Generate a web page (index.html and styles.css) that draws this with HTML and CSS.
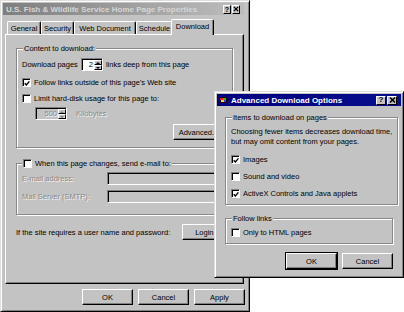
FILE: index.html
```html
<!DOCTYPE html>
<html lang="en">
<head>
    <meta charset="UTF-8">
    <title>U.S. Fish &amp; Wildlife Service Home Page Properties</title>
    <link rel="stylesheet" href="styles.css">
</head>
<body>
    <div class="window main">
        <div class="titlebar inactive">
            <span class="title">U.S. Fish &amp; Wildlife Service Home Page Properties</span>
            <span class="tbtn">?</span>
            <span class="tbtn"><svg width="7" height="6" viewBox="0 0 7 6"><path d="M1 0.5 L6 5.5 M6 0.5 L1 5.5" stroke="#000" stroke-width="1.4"/></svg></span>
        </div>

        <div class="tabs">
            <div class="tab tab-general">General</div>
            <div class="tab tab-security">Security</div>
            <div class="tab tab-web">Web Document</div>
            <div class="tab tab-schedule">Schedule</div>
            <div class="tab tab-download active">Download</div>
        </div>

        <div class="panel">
            <fieldset class="group content-group">
                <legend>Content to download:</legend>
                <div class="row depth-row">
                    <span>Download pages</span>
                    <span class="spin">
                        <span class="spin-val">2</span>
                        <span class="spin-btns"><i class="arrow up"></i><i class="arrow down"></i></span>
                    </span>
                    <span>links deep from this page</span>
                </div>
                <div class="check-row follow-row">
                    <span class="box"><svg width="7" height="7" viewBox="0 0 7 7"><path d="M0.8 3.2 L2.8 5.3 L6.3 1" fill="none" stroke="#000" stroke-width="1.6"/></svg></span>
                    <span>Follow links outside of this page's Web site</span>
                </div>
                <div class="check-row limit-row">
                    <span class="box"></span>
                    <span>Limit hard-disk usage for this page to:</span>
                </div>
                <div class="row kb-row disabled">
                    <span class="spin wide">
                        <span class="spin-val">500</span>
                        <span class="spin-btns"><i class="arrow up"></i><i class="arrow down"></i></span>
                    </span>
                    <span class="kb-label">Kilobytes</span>
                </div>
                <div class="row adv-row">
                    <button class="btn">Advanced...</button>
                </div>
            </fieldset>

            <fieldset class="group mail-group">
                <legend>
                    <span class="check-row">
                        <span class="box"></span>
                        <span>When this page changes, send e-mail to:</span>
                    </span>
                </legend>
                <div class="field-row disabled">
                    <span class="field-label">E-mail address:</span>
                    <span class="textbox"></span>
                </div>
                <div class="field-row disabled">
                    <span class="field-label">Mail Server (SMTP):</span>
                    <span class="textbox"></span>
                </div>
            </fieldset>

            <div class="login-row">
                <span>If the site requires a user name and password:</span>
                <button class="btn">Login...</button>
            </div>
        </div>

        <div class="footer">
            <button class="btn">OK</button>
            <button class="btn">Cancel</button>
            <button class="btn">Apply</button>
        </div>
    </div>

    <div class="window dialog">
        <div class="titlebar active-bar">
            <svg class="app-icon" width="9" height="8" viewBox="0 0 9 8">
                <rect x="0" y="1" width="9" height="6" fill="#200010"/>
                <rect x="1" y="2" width="3" height="2" fill="#e02020"/>
                <rect x="4" y="2" width="3" height="2" fill="#20c020"/>
                <rect x="2" y="4" width="3" height="2" fill="#f0e020"/>
                <rect x="5" y="4" width="2" height="2" fill="#2040ff"/>
            </svg>
            <span class="title">Advanced Download Options</span>
            <span class="tbtn">?</span>
            <span class="tbtn"><svg width="7" height="6" viewBox="0 0 7 6"><path d="M1 0.5 L6 5.5 M6 0.5 L1 5.5" stroke="#000" stroke-width="1.5"/></svg></span>
        </div>

        <div class="dialog-body">
            <fieldset class="group items-group">
                <legend>Items to download on pages</legend>
                <p class="note">Choosing fewer items decreases download time,<br>but may omit content from your pages.</p>
                <div class="check-row">
                    <span class="box"><svg width="7" height="7" viewBox="0 0 7 7"><path d="M0.8 3.2 L2.8 5.3 L6.3 1" fill="none" stroke="#000" stroke-width="1.6"/></svg></span>
                    <span>Images</span>
                </div>
                <div class="check-row">
                    <span class="box"></span>
                    <span>Sound and video</span>
                </div>
                <div class="check-row">
                    <span class="box"><svg width="7" height="7" viewBox="0 0 7 7"><path d="M0.8 3.2 L2.8 5.3 L6.3 1" fill="none" stroke="#000" stroke-width="1.6"/></svg></span>
                    <span>ActiveX Controls and Java applets</span>
                </div>
            </fieldset>

            <fieldset class="group follow-group">
                <legend>Follow links</legend>
                <div class="check-row">
                    <span class="box"></span>
                    <span>Only to HTML pages</span>
                </div>
            </fieldset>

            <div class="dialog-buttons">
                <button class="btn default">OK</button>
                <button class="btn">Cancel</button>
            </div>
        </div>
    </div>
</body>
</html>
```

FILE: styles.css
```css
body {
    margin: 0;
    width: 404px;
    height: 312px;
    overflow: hidden;
    position: relative;
    background: #fff;
    font-family: 'Liberation Sans', Arial, sans-serif;
    font-size: 7.5px;
    color: #000;
}
.window {
    box-sizing: border-box;
    background: #c3c3c3;
    border: 1px solid;
    border-color: #dedede #000 #000 #dedede;
    box-shadow: inset 1px 1px #fff, inset -1px -1px #808080;
    padding: 2px;
}
.main {
    width: 250px;
    height: 312px;
    display: flex;
    flex-direction: column;
}
.titlebar {
    height: 12px;
    display: flex;
    align-items: center;
    padding: 0 4px 0 3px;
    gap: 1px;
}
.titlebar .title {
    flex: 1;
    font-weight: bold;
    font-size: 8px;
    white-space: nowrap;
    overflow: hidden;
}
.inactive {
    margin-right: 3px;
    background: linear-gradient(to right, #7e7e7e, #bdbdbd);
}
.inactive .title {
    color: #d6d6d6;
}
.tbtn {
    width: 8px;
    height: 9px;
    box-sizing: border-box;
    background: #c3c3c3;
    border: 1px solid;
    border-color: #fff #000 #000 #fff;
    display: flex;
    align-items: center;
    justify-content: center;
    font-weight: bold;
    font-size: 7px;
    line-height: 1;
}

/* tabs */
.tabs {
    display: flex;
    align-items: flex-end;
    margin: 4px 0 0;
    padding-left: 4px;
    height: 15px;
    position: relative;
    z-index: 1;
}
.tab {
    height: 13px;
    box-sizing: border-box;
    padding-top: 2px;
    border: 1px solid;
    border-bottom: none;
    border-color: #fff #000 #000 #fff;
    border-radius: 2px 2px 0 0;
    box-shadow: inset -1px 0 #808080;
    white-space: nowrap;
    text-align: center;
    line-height: 9px;
}
.tab-general { width: 34px; }
.tab-security { width: 33px; }
.tab-web { width: 62px; }
.tab-schedule { width: 37px; }
.tab.active {
    width: 43px;
    height: 16px;
    margin: 0 -2px -1px;
    background: #c3c3c3;
}

.panel {
    height: 250px;
    box-sizing: border-box;
    margin: 0 3px 0 2px;
    border: 1px solid;
    border-color: #fff #000 #000 #fff;
    box-shadow: inset -1px -1px #808080;
    padding: 9px 10px 0 10px;
    display: flex;
    flex-direction: column;
}

/* group boxes */
.group {
    margin: 0;
    border: 1px solid #888;
    box-shadow: 1px 1px #fff, inset 1px 1px #fff;
    padding: 0 5px;
}
.group legend {
    padding: 0 1px;
    line-height: 9px;
    background: #c3c3c3;
    margin-left: 1px;
}
.content-group {
    height: 104px;
    box-sizing: border-box;
}
.mail-group {
    height: 56px;
    box-sizing: border-box;
    margin-top: 11px;
}
.mail-group legend {
    margin-left: 0;
}
.mail-group legend .check-row {
    height: 9px;
}

.row {
    display: flex;
    align-items: center;
    gap: 3px;
    white-space: nowrap;
}
.depth-row {
    margin-top: 5px;
}
.spin {
    width: 22px;
    height: 13px;
    box-sizing: border-box;
    background: #fff;
    border: 1px solid;
    border-color: #808080 #fff #fff #808080;
    box-shadow: inset 1px 1px #000;
    display: flex;
    padding: 1px 0 0 1px;
}
.spin.wide {
    width: 32px;
    margin-left: 13px;
}
.spin-val {
    flex: 1;
    text-align: right;
    line-height: 10px;
    padding-right: 1px;
}
.spin-btns {
    width: 8px;
    display: flex;
    flex-direction: column;
}
.arrow {
    flex: 1;
    box-sizing: border-box;
    background: #c3c3c3;
    border: 1px solid;
    border-color: #fff #000 #000 #fff;
    position: relative;
}
.arrow::after {
    content: '';
    position: absolute;
    left: 1px;
    border-left: 2px solid transparent;
    border-right: 2px solid transparent;
}
.arrow.up::after {
    top: 1px;
    border-bottom: 2px solid #000;
}
.arrow.down::after {
    top: 1px;
    border-top: 2px solid #000;
}
.disabled {
    color: #8a8a8a;
    text-shadow: 1px 1px #f4f4f4;
}
.disabled .spin {
    background: #c3c3c3;
}
.disabled .arrow::after {
    border-top-color: #808080;
    border-bottom-color: #808080;
}
.kb-row {
    margin-top: 4px;
}
.kb-label {
    margin-left: 6px;
}

.check-row {
    display: flex;
    align-items: center;
    gap: 3px;
    white-space: nowrap;
}
.box {
    width: 9px;
    height: 9px;
    box-sizing: border-box;
    background: #fff;
    border: 1px solid;
    border-color: #808080 #fff #fff #808080;
    box-shadow: inset 1px 1px #000;
    display: flex;
    align-items: center;
    justify-content: center;
    padding: 1px 0 0 1px;
}
.follow-row {
    margin-top: 7px;
}
.limit-row {
    margin-top: 7px;
}
.adv-row {
    margin-top: 4px;
    padding-left: 151px;
}

.btn {
    width: 51px;
    height: 16px;
    box-sizing: border-box;
    padding: 0;
    font: inherit;
    color: #000;
    background: #c3c3c3;
    border: 1px solid;
    border-color: #fff #000 #000 #fff;
    box-shadow: inset -1px -1px #808080;
}
.btn.default {
    outline: 1px solid #000;
}

.field-row {
    display: flex;
    align-items: center;
    margin-top: 4px;
}
.field-row + .field-row {
    margin-top: 5px;
}
.field-label {
    width: 85px;
}
.textbox {
    flex: 1;
    height: 13px;
    box-sizing: border-box;
    border: 1px solid;
    border-color: #808080 #fff #fff #808080;
    box-shadow: inset 1px 1px #000;
}

.login-row {
    display: flex;
    align-items: center;
    justify-content: space-between;
    margin-top: 9px;
}

.footer {
    display: flex;
    justify-content: flex-end;
    gap: 5px;
    margin: 5px 2px 0 0;
}

/* advanced dialog */
.dialog {
    position: absolute;
    left: 214px;
    top: 91px;
    width: 190px;
    height: 187px;
}
.active-bar {
    background: linear-gradient(to right, #000080, #08108c);
    padding-left: 2px;
}
.active-bar .title {
    color: #fff;
    margin-left: 2px;
}
.active-bar .tbtn {
    width: 10px;
    font-size: 8px;
}
.dialog-body {
    padding: 7px 8px 0 8px;
}
.items-group {
    height: 92px;
    box-sizing: border-box;
    padding-left: 5px;
}
.note {
    margin: 5px 0 0;
    line-height: 10px;
    white-space: nowrap;
}
.items-group .check-row {
    height: 9px;
    margin-top: 8px;
}
.follow-group {
    margin-top: 9px;
    height: 30px;
    box-sizing: border-box;
}
.follow-group .check-row {
    margin-top: 5px;
}
.dialog-buttons {
    display: flex;
    justify-content: flex-end;
    gap: 5px;
    margin-top: 9px;
}
```
